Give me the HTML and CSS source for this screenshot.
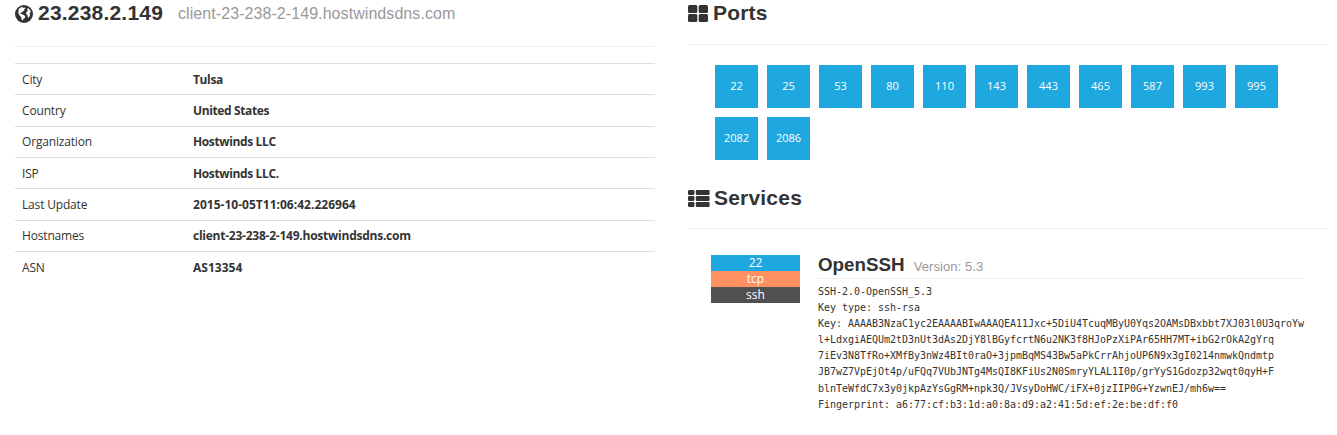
FILE: index.html
```html
<!DOCTYPE html>
<html lang="en">
<head>
<meta charset="utf-8">
<title>23.238.2.149</title>
<link rel="stylesheet" href="styles.css">
</head>
<body>
<div class="page">
  <section class="host">
    <h2 class="title host-title">
      <svg class="icon-globe" width="18" height="18" viewBox="0 0 18 18"><circle cx="9" cy="9" r="9" fill="#333"/><path d="M3.6 4.2 5.6 2.4 7.6 2l.8.9 1.4-.3.6 1-1.3 1 .2 1.1-1.6.6-.8 1.2-1.4.3-.2 1 1.7.4 1.8.8 1.4 1.3-.4 1.7-1.4 1-.7 1.8-1.2-1.6-.3-2.1-1.8-1.8-1-2.2.2-2.4zM12.2 3.4l1.5.1 1.4 1.7.8 2.1-.8.1-.7.7.7 1.4-.6 2-1.1 1.2-.7-.7-.2-1.9-1.2-.9-.2-1.4 1-1.3 1-.5-.8-.9z" fill="#fff"/></svg>
      <span class="ip">23.238.2.149</span>
      <small class="client">client-23-238-2-149.hostwindsdns.com</small>
    </h2>
    <table class="facts">
      <tr><td>City</td><th>Tulsa</th></tr>
      <tr><td>Country</td><th>United States</th></tr>
      <tr><td>Organization</td><th>Hostwinds LLC</th></tr>
      <tr><td>ISP</td><th>Hostwinds LLC.</th></tr>
      <tr><td>Last Update</td><th class="stamp">2015-10-05T11:06:42.226964</th></tr>
      <tr><td>Hostnames</td><th class="hostname">client-23-238-2-149.hostwindsdns.com</th></tr>
      <tr><td>ASN</td><th class="stamp">AS13354</th></tr>
    </table>
  </section>
  <section class="details">
    <h2 class="title ports-title">
      <svg class="icon-tiles" width="20" height="17" viewBox="0 0 20 17" fill="#333"><rect width="9.3" height="8" rx="1.5"/><rect x="10.7" width="9.3" height="8" rx="1.5"/><rect y="9" width="9.3" height="8" rx="1.5"/><rect x="10.7" y="9" width="9.3" height="8" rx="1.5"/></svg>
      <span>Ports</span>
    </h2>
    <ul class="ports">
      <li>22</li><li>25</li><li>53</li><li>80</li><li>110</li><li>143</li><li>443</li><li>465</li><li>587</li><li>993</li><li>995</li><li>2082</li><li>2086</li>
    </ul>
    <h2 class="title services-title">
      <svg class="icon-list" width="22" height="17" viewBox="0 0 22 17" fill="#333"><rect width="6.4" height="5" rx="1.2"/><rect x="7.8" width="13.8" height="5" rx="1.2"/><rect y="6" width="6.4" height="5" rx="1.2"/><rect x="7.8" y="6" width="13.8" height="5" rx="1.2"/><rect y="12" width="6.4" height="5" rx="1.2"/><rect x="7.8" y="12" width="13.8" height="5" rx="1.2"/></svg>
      <span>Services</span>
    </h2>
    <div class="service">
      <div class="tags">
        <div class="tag port">22</div>
        <div class="tag proto">tcp</div>
        <div class="tag state">ssh</div>
      </div>
      <div class="banner">
        <h3 class="product"><span>OpenSSH</span><small>Version: 5.3</small></h3>
<pre class="output">SSH-2.0-OpenSSH_5.3
Key type: ssh-rsa
Key: AAAAB3NzaC1yc2EAAAABIwAAAQEA11Jxc+5DiU4TcuqMByU0Yqs2OAMsDBxbbt7XJ03l0U3qroYw
l+LdxgiAEQUm2tD3nUt3dAs2DjY8lBGyfcrtN6u2NK3f8HJoPzXiPAr65HH7MT+ibG2rOkA2gYrq
7iEv3N8TfRo+XMfBy3nWz4BIt0raO+3jpmBqMS43Bw5aPkCrrAhjoUP6N9x3gI0214nmwkQndmtp
JB7wZ7VpEjOt4p/uFQq7VUbJNTg4MsQI8KFiUs2N0SmryYLAL1I0p/grYyS1Gdozp32wqt0qyH+F
blnTeWfdC7x3y0jkpAzYsGgRM+npk3Q/JVsyDoHWC/iFX+0jzIIP0G+YzwnEJ/mh6w==
Fingerprint: a6:77:cf:b3:1d:a0:8a:d9:a2:41:5d:ef:2e:be:df:f0</pre>
      </div>
    </div>
  </section>
</div>
</body>
</html>
```
FILE: styles.css
```css
* { box-sizing: border-box; }
body {
  margin: 0;
  background: #fff;
  color: #333;
  font-family: "Open Sans", sans-serif;
  font-size: 12px;
}
.page {
  display: grid;
  grid-template-columns: 640px 640px;
  column-gap: 33px;
  padding-left: 15px;
}
.title {
  display: flex;
  align-items: flex-start;
  margin: 0;
  border-bottom: 1px solid #eee;
  font: bold 21px/26px "Liberation Sans", Arial, sans-serif;
  letter-spacing: 0.2px;
}
.title svg { flex: none; }
.host-title { height: 47px; }
.icon-globe { margin: 5px 5px 0 0; }
.client {
  margin-left: 15px;
  padding-top: 1px;
  color: #999;
  font-size: 16px;
  font-weight: normal;
  letter-spacing: 0.07px;
}
.facts {
  width: 100%;
  margin-top: 16px;
  border-collapse: separate;
  border-spacing: 0;
  line-height: 17px;
}
.facts td, .facts th {
  height: 31.34px;
  padding: 0.4px 7px 0;
  border-top: 1px solid #ddd;
  text-align: left;
  vertical-align: middle;
}
.facts tr:nth-child(3n) > * { padding-bottom: 1.4px; }
.facts td { width: 171px; letter-spacing: -0.17px; }
.facts th { font-weight: 700; letter-spacing: -0.37px; }
.facts .stamp { letter-spacing: 0.02px; }
.facts .hostname { letter-spacing: -0.24px; }
.ports-title { height: 45px; }
.icon-tiles { margin: 5px 5px 0 0; }
.ports {
  display: flex;
  flex-wrap: wrap;
  gap: 9px;
  margin: 0;
  padding: 20px 40px 0 27px;
  list-style: none;
}
.ports li {
  width: 43px;
  height: 43px;
  background: #1ea8df;
  color: #fff;
  font-size: 11px;
  line-height: 42px;
  text-align: center;
}
.services-title { height: 44px; margin-top: 25px; }
.icon-list { margin: 5px 4px 0 0; }
.service {
  display: grid;
  grid-template-columns: 89px 486px;
  column-gap: 18px;
  padding: 26px 0 0 23px;
}
.tag {
  height: 16px;
  color: #fff;
  line-height: 16px;
  text-align: center;
}
.port { background: #1ea8df; }
.proto { background: #ff9060; }
.state { background: #505050; }
.product {
  display: flex;
  align-items: baseline;
  height: 24px;
  margin: 0;
  border-bottom: 1px solid #eee;
  font: bold 18.8px/20px "Liberation Sans", Arial, sans-serif;
}
.product small {
  margin-left: 9px;
  color: #999;
  font-size: 13px;
  font-weight: normal;
  letter-spacing: 0.08px;
}
.output {
  margin: 5px 0 0;
  font: 10px/16.09px "DejaVu Sans Mono", monospace;
  letter-spacing: -0.02px;
}
```
